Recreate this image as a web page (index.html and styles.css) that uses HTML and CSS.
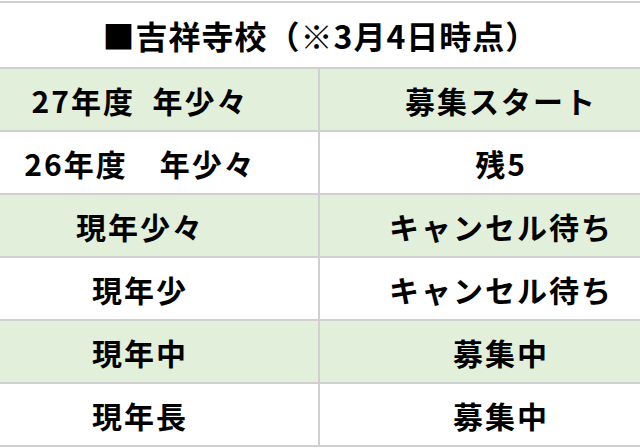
FILE: index.html
```html
<!DOCTYPE html>
<html lang="ja">
<head>
<meta charset="utf-8">
<link rel="stylesheet" href="styles.css">
</head>
<body>
<div class="sheet">
  <div class="title">■吉祥寺校（※3月4日時点）</div>
  <div class="row green"><div class="cell left">27年度&nbsp; 年少々</div><div class="cell">募集スタート</div></div>
  <div class="row"><div class="cell left">26年度　年少々</div><div class="cell">残5</div></div>
  <div class="row green"><div class="cell left">現年少々</div><div class="cell">キャンセル待ち</div></div>
  <div class="row"><div class="cell left">現年少</div><div class="cell">キャンセル待ち</div></div>
  <div class="row green"><div class="cell left">現年中</div><div class="cell">募集中</div></div>
  <div class="row"><div class="cell left">現年長</div><div class="cell">募集中</div></div>
</div>
</body>
</html>
```
FILE: styles.css
```css
html, body {
  margin: 0;
  padding: 0;
  background: #ffffff;
  overflow: hidden;
}
body {
  width: 640px;
  height: 448px;
  font-family: "Noto Sans CJK JP", "Noto Sans", sans-serif;
  font-weight: bold;
  color: #000;
}
.sheet {
  width: 720px;
  margin-left: -40px;
  margin-top: 1px;
  border-top: 2px solid #d0d0d0;
}
.title {
  height: 64px;
  display: flex;
  align-items: center;
  justify-content: center;
  font-size: 32px;
  letter-spacing: 1px;
  padding-left: 1px;
  border-bottom: 2px solid #d0d0d0;
}
.row {
  display: grid;
  grid-template-columns: 360px 360px;
  height: 61px;
  border-bottom: 2px solid #d0d0d0;
}
.row.green {
  background: #e2efda;
}
.cell {
  display: flex;
  align-items: center;
  justify-content: center;
  font-size: 30px;
  letter-spacing: 2px;
  padding-left: 2px;
  line-height: 1;
}
.cell.left {
  border-right: 2px solid #d0d0d0;
}
```
